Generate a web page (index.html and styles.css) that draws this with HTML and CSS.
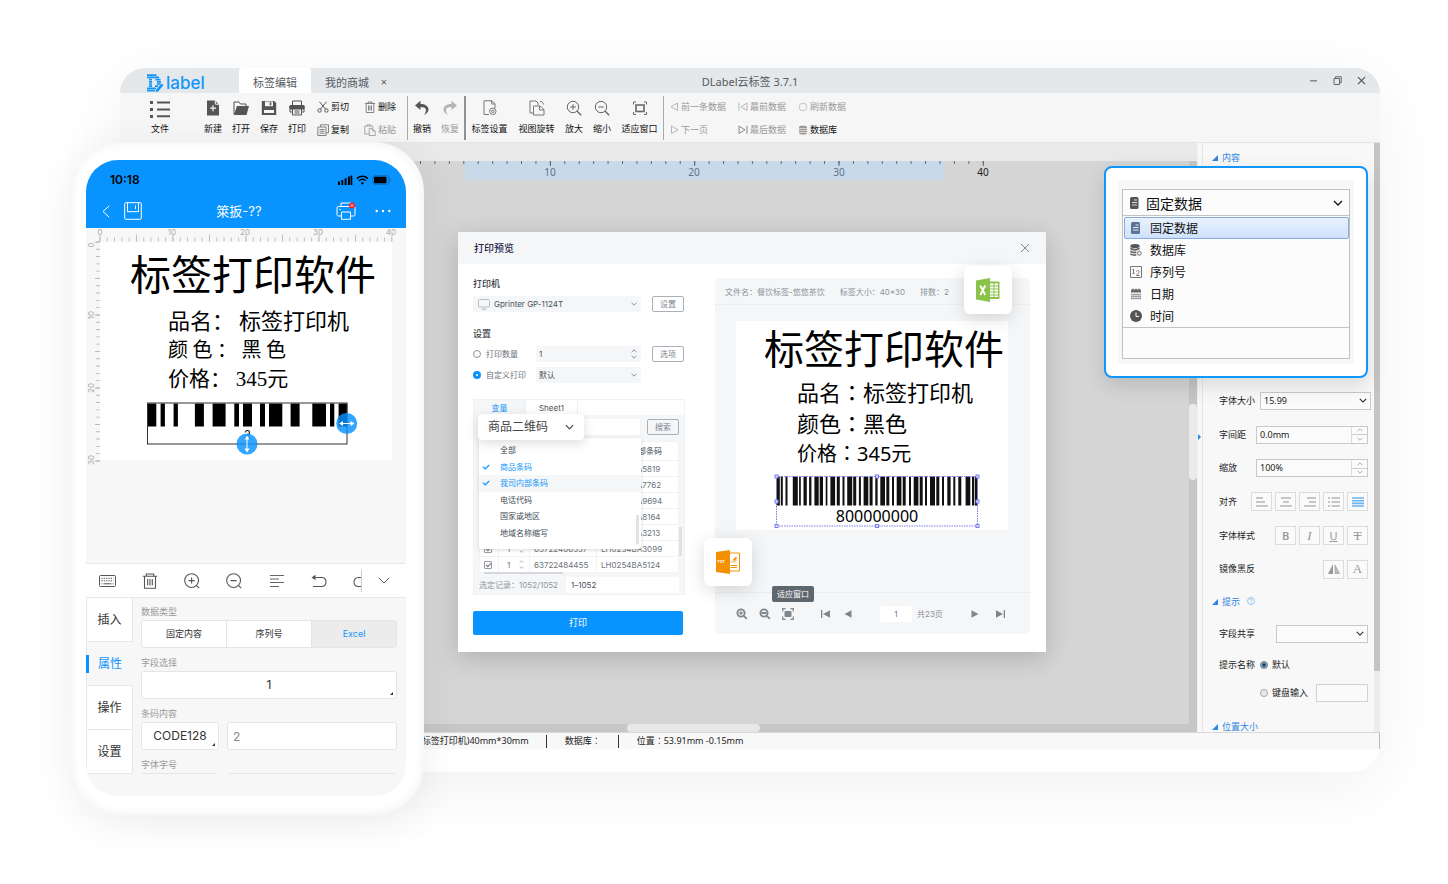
FILE: index.html
```html
<!DOCTYPE html>
<html lang="zh-CN">
<head>
<meta charset="utf-8">
<meta name="viewport" content="width=device-width, initial-scale=1">
<title>DLabel云标签 3.7.1</title>
<link rel="stylesheet" href="styles.css">
</head>
<body>
<svg class="sprite" aria-hidden="true">
  <symbol id="chev" viewBox="0 0 10 6"><path d="M1 1l4 4 4-4" fill="none" stroke="currentColor" stroke-width="1.3"/></symbol>
  <symbol id="chev-up" viewBox="0 0 10 6"><path d="M1 5l4-4 4 4" fill="none" stroke="currentColor" stroke-width="1.3"/></symbol>
  <symbol id="tri" viewBox="0 0 6 6"><path d="M6 0v6H0z" fill="currentColor"/></symbol>
  <symbol id="check" viewBox="0 0 8 6"><path d="M1 2.6l2.2 2.3L7.2 1" fill="none" stroke="currentColor" stroke-width="1.3"/></symbol>
  <symbol id="zin" viewBox="0 0 16 16"><g fill="none" stroke="currentColor"><circle cx="7" cy="7" r="5.7"/><path d="M11.2 11.2l4 4" stroke-width="1.4"/><path d="M4.2 7h5.6M7 4.2v5.6"/></g></symbol>
  <symbol id="zout" viewBox="0 0 16 16"><g fill="none" stroke="currentColor"><circle cx="7" cy="7" r="5.7"/><path d="M11.2 11.2l4 4" stroke-width="1.4"/><path d="M4.2 7h5.6"/></g></symbol>
  <symbol id="pzin" viewBox="0 0 16 16"><g fill="none" stroke="currentColor" stroke-width="1.1"><circle cx="7.6" cy="7.6" r="6.9"/><path d="M12.6 12.6l2.6 2.6M4.6 7.6h6M7.6 4.6v6"/></g></symbol>
  <symbol id="pzout" viewBox="0 0 16 16"><g fill="none" stroke="currentColor" stroke-width="1.1"><circle cx="7.6" cy="7.6" r="6.9"/><path d="M12.6 12.6l2.6 2.6M4.6 7.6h6"/></g></symbol>
</svg>
<main class="stage">
<div class="window">
  <header class="titlebar">
    <div class="logo">
      <svg width="18" height="18" viewBox="0 0 18 18" fill="none" stroke="#1296fb"><path d="M1 1.2h9.5M1 3.4h12M3 5.6h3M9.5 5.6h5M3 7.8h3M11 7.8h4M3 10h3M11 10h3.5M3 12.2h3M9 12.2h3M1 14.4h9M1 16.6h8" stroke-width="1.7"/><path d="M10 15.8l5.4-6.3 2 1.8-5.2 6.2-2.7.4z" fill="#1296fb" stroke="none"/></svg>
      <span>label</span>
    </div>
    <nav class="tabs"><button class="tab tab-on">标签编辑</button><button class="tab">我的商城</button><button class="tab-x" aria-label="关闭标签">×</button></nav>
    <h1 class="app-title">DLabel云标签 3.7.1</h1>
    <div class="win-btns">
      <button aria-label="最小化"><svg width="9" height="9" viewBox="0 0 9 9"><path d="M1 4.8h7" stroke="#888e96" stroke-width="1.6"/></svg></button>
      <button aria-label="还原"><svg width="9" height="9" viewBox="0 0 9 9" fill="none" stroke="#62676f"><path d="M1 2.5h5.5v6H1zM2.5 2.2V.8h5.700v6H7"/></svg></button>
      <button aria-label="关闭"><svg width="9" height="9" viewBox="0 0 9 9"><path d="M1 1.2l7 7M8 1.2l-7 7" stroke="#4f545b" stroke-width="1.2"/></svg></button>
    </div>
  </header>

  <div class="toolbar">
    <button class="tool tool-file"><svg width="22" height="18" viewBox="0 0 22 18"><path d="M1 1h3v3H1zM1 8h3v3H1zM1 15h3v3H1zM8 1.5h13v2H8zM8 8.5h13v2H8zM8 15.2h13v2H8z" fill="#555"/></svg><span>文件</span></button>
    <div class="tool-set">
      <button class="tool"><svg width="16" height="16" viewBox="0 0 16 16"><path d="M2 .5h8l4 4v11H2z" fill="#555"/><path d="M10.3.5v3.7H14" stroke="#f5f5f5" fill="none"/><path d="M5 8.2h6M8 5.2v6" stroke="#f5f5f5" stroke-width="1.2"/></svg><span>新建</span></button>
      <button class="tool"><svg width="16" height="16" viewBox="0 0 16 16"><path d="M1 14V2h5l1.500 2H13v2" fill="none" stroke="#555"/><path d="M4 6h12l-2.500 9H.8z" fill="#555"/></svg><span>打开</span></button>
      <button class="tool"><svg width="16" height="16" viewBox="0 0 16 16"><path d="M.8 1h12.400l2 2v12H.8z" fill="#555"/><path d="M4 1.500h8v4.700H4z" fill="#f5f5f5"/><path d="M9.500 2.300v3" stroke="#555" stroke-width="1.600"/><path d="M3 10h10v3H3z" fill="#f5f5f5"/></svg><span>保存</span></button>
      <button class="tool"><svg width="16" height="16" viewBox="0 0 16 16" fill="none" stroke="#555"><path d="M3.500 5V1h9v4M3.500 12H1V5.500h14V12h-2.500"/><path d="M1 6h14v3H1z" fill="#555"/><path d="M3.500 9h9v6h-9z" fill="#f5f5f5"/><path d="M5.500 11h5M5.500 13h5"/></svg><span>打印</span></button>
    </div>
    <div class="mini-grid edit-grid">
      <button class="mini"><svg width="12" height="12" viewBox="0 0 12 12" fill="none" stroke="#555"><circle cx="2.600" cy="9.500" r="1.700"/><circle cx="9.400" cy="9.500" r="1.700"/><path d="M3.500 8L9.500.8M8.500 8L2.500.8"/></svg>剪切</button>
      <button class="mini"><svg width="12" height="12" viewBox="0 0 12 12" fill="none" stroke="#777" stroke-width=".9"><path d="M1 2.500h10M4 2.500V1h4v1.500M2.200 2.500v9h7.600v-9M4.500 4.500v5M6 4.500v5M7.500 4.500v5"/></svg>删除</button>
      <button class="mini"><svg width="12" height="12" viewBox="0 0 12 12" fill="none" stroke="#777" stroke-width=".9"><path d="M3.500 3V.8h8v8H9M.8 3H9v8.500H.8zM2.500 5.500h5M2.500 7.300h5M2.500 9.200h5"/></svg>复制</button>
      <button class="mini dim"><svg width="12" height="12" viewBox="0 0 12 12" fill="none" stroke="#aaa"><path d="M5 10H.8V2h8v2M3 2.500V.8h3.500v1.700M5.200 4.500h3.300l2.700 2.500v4.500h-6zM8.300 4.500V7h2.800"/></svg>粘贴</button>
    </div>
    <i class="bar"></i>
    <div class="tool-set">
      <button class="tool"><svg width="16" height="16" viewBox="0 0 16 16"><path d="M6.500.8L1 5.500l5.500 4.500V7c3 0 4.800.7 5.300 2.300.5 1.700-.3 3.600-1.800 5.700 3-1.500 4.500-3.300 4.500-5.500 0-3.500-3.500-5.500-8-5.500z" fill="#555"/></svg><span>撤销</span></button>
      <button class="tool dim"><svg width="16" height="16" viewBox="0 0 16 16"><path d="M9.500.8L15 5.500l-5.500 4.500V7c-3 0-4.800.7-5.300 2.300-.5 1.700.3 3.600 1.800 5.700-3-1.500-4.500-3.300-4.500-5.500 0-3.500 3.500-5.500 8-5.500z" fill="#b5b5b5"/></svg><span>恢复</span></button>
    </div>
    <i class="bar bar-bold"></i>
    <div class="tool-set">
      <button class="tool tool-wide"><svg width="16" height="16" viewBox="0 0 16 16" fill="none" stroke="#777"><path d="M7 14.500H2V.8h8l3 3V8M9.700.8V4H13"/><circle cx="10.800" cy="11.300" r="3.200"/><circle cx="10.800" cy="11.300" r="1.200"/></svg><span>标签设置</span></button>
      <button class="tool tool-wide"><svg width="16" height="16" viewBox="0 0 16 16" fill="none" stroke="#777"><path d="M4 13H1V1h6l2 2v2M4.500 15V6h6.500l4 3.500V15zM10.500 6v4H15M11 1.500c2 0 3 .8 3.500 3"/></svg><span>视图旋转</span></button>
      <button class="tool"><svg class="ic-zoom" width="16" height="16"><use href="#zin"/></svg><span>放大</span></button>
      <button class="tool"><svg class="ic-zoom" width="16" height="16"><use href="#zout"/></svg><span>缩小</span></button>
      <button class="tool tool-wide"><svg width="16" height="16" viewBox="0 0 16 16" fill="none" stroke="#666"><path d="M1.500 4.500V2H4M12 2h2.500v2.500M14.500 12v2.500H12M4 14.500H1.500V12"/><path d="M4 5h8v6.500H4z" stroke-width="1.600"/></svg><span>适应窗口</span></button>
    </div>
    <i class="bar"></i>
    <div class="mini-grid data-grid">
      <button class="mini dim"><svg width="9" height="10" viewBox="0 0 9 10" fill="none" stroke="#b5b5b5"><path d="M7.500 1v7.500L1 4.800z"/></svg>前一条数据</button>
      <button class="mini dim"><svg width="10" height="10" viewBox="0 0 10 10" fill="none" stroke="#b5b5b5"><path d="M9 1v7.500L3 4.800zM1 .8v8"/></svg>最前数据</button>
      <button class="mini dim"><svg width="10" height="10" viewBox="0 0 10 10" fill="none" stroke="#c5c5c5"><circle cx="5" cy="5" r="3.800"/></svg>刷新数据</button>
      <button class="mini dim"><svg width="9" height="10" viewBox="0 0 9 10" fill="none" stroke="#b5b5b5"><path d="M1.500 1v7.500L8 4.800z"/></svg>下一页</button>
      <button class="mini dim"><svg width="10" height="10" viewBox="0 0 10 10" fill="none" stroke="#888"><path d="M1 1v7.500l6-3.700zM9 .8v8"/></svg>最后数据</button>
      <button class="mini"><svg width="10" height="10" viewBox="0 0 10 10"><rect x="1" y=".8" width="8" height="8.600" rx="2" fill="#999"/><path d="M1 3.500h8M1 5.500h8M1 7.500h8" stroke="#eee" stroke-width=".7"/></svg>数据库</button>
    </div>
  </div>

  <div class="workspace">
    <section class="canvas">
      <div class="canvas-strip"></div>
      <div class="ruler">
        <svg width="600" height="19" viewBox="0 0 600 19">
          <rect x="45" y="0" width="480" height="19" fill="#c8d9ea"/>
          <path d="M0 1.500H565" stroke="#5c6b7a" stroke-width="3" stroke-dasharray="1 13.430" fill="none"/>
          <path d="M129.900 2.500H565" stroke="#5c6b7a" stroke-width="5" stroke-dasharray="1 143.300" fill="none"/>
          <g class="ruler-num"><text x="130" y="15">10</text><text x="274" y="15">20</text><text x="419" y="15">30</text><text x="563" y="15" class="ruler-dark">40</text></g>
        </svg>
      </div>
      <div class="v-scroll"><i></i></div>
      <div class="h-scroll"><i></i></div>
    </section>
    <aside class="side">
      <i class="side-handle"></i>
      <h2 class="side-head side-first"><svg width="6" height="6"><use href="#tri"/></svg>内容</h2>
      <div class="side-rows">
        <div class="row row-wide"><label for="fs">字体大小</label><span class="pick w111"><select id="fs"><option>15.99</option></select><svg width="8" height="5"><use href="#chev"/></svg></span></div>
        <div class="row"><label for="ls">字间距</label><span class="num"><input id="ls" value="0.0mm"><span class="steps"><button aria-label="增加"><svg width="6" height="4"><use href="#chev-up"/></svg></button><button aria-label="减少"><svg width="6" height="4"><use href="#chev"/></svg></button></span></span></div>
        <div class="row"><label for="sc">缩放</label><span class="num"><input id="sc" value="100%"><span class="steps"><button aria-label="增加"><svg width="6" height="4"><use href="#chev-up"/></svg></button><button aria-label="减少"><svg width="6" height="4"><use href="#chev"/></svg></button></span></span></div>
        <div class="row"><span>对齐</span><div class="icon-btns">
          <button aria-label="左对齐"><svg width="12" height="10" viewBox="0 0 12 10"><path d="M0 1h7M0 5h9M0 9h12" stroke="#b5b5b5" stroke-width="1.500"/></svg></button>
          <button aria-label="居中"><svg width="12" height="10" viewBox="0 0 12 10"><path d="M1 1h10M3 5h6M0 9h12" stroke="#b5b5b5" stroke-width="1.500"/></svg></button>
          <button aria-label="右对齐"><svg width="12" height="10" viewBox="0 0 12 10"><path d="M3 1h9M5 5h7M0 9h12" stroke="#b5b5b5" stroke-width="1.500"/></svg></button>
          <button aria-label="列表"><svg width="12" height="10" viewBox="0 0 12 10"><path d="M0 1h2M3.500 1H12M0 5h2M3.500 5H12M0 9h2M3.500 9H12" stroke="#b5b5b5" stroke-width="1.500"/></svg></button>
          <button aria-label="两端对齐"><svg width="12" height="10" viewBox="0 0 12 10"><path d="M0 1h12M0 3.700h12M0 6.400h12M0 9h12" stroke="#6cb4f5" stroke-width="1.600"/></svg></button>
        </div></div>
        <div class="row"><span>字体样式</span><div class="icon-btns glyphs"><button><b>B</b></button><button><i>I</i></button><button><u>U</u></button><button><s>T</s></button></div></div>
        <div class="row"><span>镜像黑反</span><div class="icon-btns glyphs"><button aria-label="镜像"><svg width="12" height="10" viewBox="0 0 12 10"><path d="M5 0v10H0z" fill="#999"/><path d="M7 1v8.500h4.500z" fill="#bbb" stroke="#999" stroke-width=".6"/></svg></button><button class="serif">A</button></div></div>
      </div>
      <h2 class="side-head"><svg width="6" height="6"><use href="#tri"/></svg>提示 <svg class="help" width="8" height="8" viewBox="0 0 8 8" fill="none" stroke="#6fb1ee" stroke-width=".7"><circle cx="4" cy="4" r="3.500"/><path d="M2.900 3.100c0-1.500 2.300-1.300 2.200 0C5 3.900 4 3.900 4 4.800M4 5.500v.8"/></svg></h2>
      <div class="row"><label for="sh">字段共享</label><span class="pick w92"><select id="sh"><option></option></select><svg width="8" height="5"><use href="#chev"/></svg></span></div>
      <div class="row row-radio"><span class="lead">提示名称</span><label><input type="radio" name="tip" checked>默认</label></div>
      <div class="row row-key"><label><input type="radio" name="tip">键盘输入</label><input class="box" aria-label="提示名称"></div>
      <h2 class="side-head side-last"><svg width="6" height="6"><use href="#tri"/></svg>位置大小</h2>
      <div class="side-scroll"><i></i></div>
    </aside>
  </div>
  <footer class="status"><span>(标签打印机)40mm*30mm</span><i></i><span>数据库<span class="mid" lang="zh-TW">：</span></span><i></i><span>位置<span class="mid" lang="zh-TW">：</span>53.91mm -0.15mm</span></footer>

  <section class="combo-card" aria-label="数据来源">
    <div class="combo-bg"><div class="combo">
      <button class="combo-head"><svg width="10" height="12" viewBox="0 0 10 12"><rect x="1" width="8.500" height="12" rx="1.500" fill="#555"/><path d="M5 3h3M3 5.500h5M3 8h5" stroke="#ddd"/></svg><span>固定数据</span><svg class="combo-chev" width="10" height="6"><use href="#chev"/></svg></button>
      <ul>
        <li class="sel"><svg width="12" height="12" viewBox="0 0 12 12"><rect x="1" width="9" height="12" rx="1.500" fill="#5b7593"/><path d="M5.500 3h3M3 5.500h5.500M3 8h5.500" stroke="#dfeaf8"/></svg>固定数据</li>
        <li><svg width="12" height="12" viewBox="0 0 12 12"><ellipse cx="5" cy="2" rx="4.700" ry="2" fill="#555"/><path d="M.3 3.300c2 1.800 7.400 1.800 9.400 0v2c-2 1.800-7.400 1.800-9.400 0zM.3 6.300c1.500 1.300 4 1.500 6 1.200v1.800c-2 .3-4.500 0-6-1.300zM.3 9c1.500 1.300 4 1.500 6 1.200v1.600c-2 .3-4.500 0-6-1z" fill="#666"/><circle cx="9.300" cy="9.300" r="1.900" fill="none" stroke="#666"/></svg>数据库</li>
        <li><svg width="12" height="12" viewBox="0 0 12 12" fill="none" stroke="#777"><path d="M.5.500h11v11H.5z"/><path d="M2.500 3.500L3.500 3v4.500M2.500 7.500h2M6.500 5.500c.5-1.500 3-1 2.700.3C9 7 6.500 8.500 6.500 9.500h3"/></svg>序列号</li>
        <li><svg width="12" height="12" viewBox="0 0 12 12"><path d="M1 1.500h10v3H1z" fill="#666"/><path d="M3 .5v2M6 .5v2M9 .5v2" stroke="#666"/><path d="M1 6.500h10M1 8.500h10M1 10.500h10" stroke="#888" stroke-width="1.400" stroke-dasharray="1.600 .5"/></svg>日期</li>
        <li><svg width="12" height="12" viewBox="0 0 12 12"><circle cx="6" cy="6" r="6" fill="#555"/><path d="M6 2.500V6.500h3" fill="none" stroke="#fff"/></svg>时间</li>
      </ul>
      <div class="combo-rest"></div>
    </div></div>
  </section>

  <section class="dialog" role="dialog" aria-label="打印预览">
    <header class="dlg-head"><h2>打印预览</h2><button aria-label="关闭"><svg width="10" height="10" viewBox="0 0 10 10"><path d="M1 1l8 8M9 1L1 9" stroke="#858b94"/></svg></button></header>
    <div class="dlg-body">
      <form class="dlg-form">
        <label class="h3" for="prn">打印机</label>
        <div class="line"><span class="pick soft grow"><svg class="mon" width="12" height="11" viewBox="0 0 12 11" fill="none" stroke="#b8bdc2"><rect x=".5" y=".5" width="11" height="7.500" rx="1"/><path d="M6 8v2M3.500 10.300h5"/></svg><select id="prn"><option>Gprinter GP-1124T</option></select><svg width="6" height="4"><use href="#chev"/></svg></span><button type="button" class="btn">设置</button></div>
        <h3 class="h3">设置</h3>
        <div class="line"><label class="rad"><input type="radio" name="m">打印数量</label><span class="pick soft grow"><input class="qty" value="1" aria-label="打印数量"><svg class="up" width="6" height="4"><use href="#chev-up"/></svg><svg class="down" width="6" height="4"><use href="#chev"/></svg></span><button type="button" class="btn">选项</button></div>
        <div class="line line-b"><label class="rad"><input type="radio" name="m" checked>自定义打印</label><span class="pick soft grow"><select aria-label="自定义打印"><option>默认</option></select><svg width="6" height="4"><use href="#chev"/></svg></span></div>
        <div class="data">
          <div class="data-tabs"><button type="button" class="on">变量</button><button type="button">Sheet1</button></div>
          <div class="search"><input aria-label="搜索"><button type="button" class="btn">搜索</button></div>
          <div class="tbl-wrap">
          <table>
            <thead><tr><th></th><th></th><th>商品条码</th><th class="th-r">内部条码</th></tr></thead>
            <tbody>
              <tr><td></td><td></td><td></td><td>LH0254BA5819</td></tr>
              <tr><td></td><td></td><td></td><td>LH0254BA7762</td></tr>
              <tr><td></td><td></td><td></td><td>LH0254BA9694</td></tr>
              <tr><td></td><td></td><td></td><td>LH0254BA8164</td></tr>
              <tr><td></td><td></td><td></td><td>LH0254BA3213</td></tr>
              <tr><td><input type="checkbox" checked aria-label="选择"></td><td><span class="cnt">1<svg width="5" height="9" viewBox="0 0 5 9" fill="none" stroke="#999" stroke-width=".8"><path d="M.8 2.500L2.500.8l1.700 1.700M.8 6.500l1.700 1.700 1.700-1.700"/></svg></span></td><td>63722486557</td><td>LH0254BA3099</td></tr>
              <tr><td><input type="checkbox" checked aria-label="选择"></td><td><span class="cnt">1<svg width="5" height="9" viewBox="0 0 5 9" fill="none" stroke="#999" stroke-width=".8"><path d="M.8 2.500L2.500.8l1.700 1.700M.8 6.500l1.700 1.700 1.700-1.700"/></svg></span></td><td>63722484455</td><td>LH0254BA5124</td></tr>
            </tbody>
          </table>
          <i class="tv"></i><i class="th"></i>
          </div>
          <div class="picked"><label for="rng">选定记录：1052/1052</label><input id="rng" value="1–1052"></div>
          <ul class="menu">
            <li>全部</li>
            <li class="on"><svg width="8" height="6"><use href="#check"/></svg>商品条码</li>
            <li class="on hov"><svg width="8" height="6"><use href="#check"/></svg>我司内部条码</li>
            <li>电话代码</li><li>国家或地区</li><li>地域名称缩写</li>
          </ul>
          <button type="button" class="pill">商品二维码<svg width="9" height="6"><use href="#chev"/></svg></button>
        </div>
        <button type="button" class="print">打印</button>
      </form>
      <div class="preview">
        <div class="info"><span>文件名：餐饮标签-悠悠茶饮</span><span>标签大小：40*30</span><span>排数：2</span></div>
        <div class="paper">
          <p class="p-title">标签打印软件</p>
          <p class="p-line">品名<span class="mid" lang="zh-TW">：</span>标签打印机</p>
          <p class="p-line">颜色<span class="mid" lang="zh-TW">：</span>黑色</p>
          <p class="p-line p-small">价格<span class="mid" lang="zh-TW">：</span>345元</p>
          <div class="code">
            <svg width="206" height="56" viewBox="0 0 206 56">
              <path d="M2.500 17H203.500" fill="none" stroke="#111" stroke-width="29" stroke-dasharray="3.300 1 2 2.700 2 5.300 5 1.300 1.700 2.700 3.300 2.300 2.300 3 4.300 1 3.300 2.700 1.700 3 4.700 1.700 3 2.700 2 2.700 5 1 3 2.700 2 2.700 4.700 1.300 3 2.700 2.300 2.700 4.700 1.300 3 2.700 2 2.700 4.700 1.300 3 3.300 2 2.700 4.700 1.300 3 2.300 2 3 5 1.300 3 2.700 2 3.300 3.300 2.700 2 3 3 4.300 4.700 1.700 2 .7 3 99"/>
              <rect x="2.500" y="2.500" width="201" height="49.500" fill="none" stroke="#7b7bf0" stroke-dasharray="1.500 1"/>
              <g fill="#e6e6ff" stroke="#7b7bf0"><rect x="1" y="1" width="3" height="3"/><rect x="101.500" y="1" width="3" height="3"/><rect x="202" y="1" width="3" height="3"/><rect x="1" y="26" width="3" height="3"/><rect x="202" y="26" width="3" height="3"/><rect x="1" y="50.500" width="3" height="3"/><rect x="101.500" y="50.500" width="3" height="3"/><rect x="202" y="50.500" width="3" height="3"/></g>
            </svg>
            <span>800000000</span>
          </div>
        </div>
        <div class="pager">
          <button aria-label="放大"><svg width="12" height="12" viewBox="0 0 12 12" fill="none" stroke="#7c868c"><circle cx="5" cy="5" r="3.600" stroke-width="1.800"/><path d="M7.800 7.800l3 3" stroke-width="1.800"/><path d="M3.200 5h3.600M5 3.200v3.600" stroke-width="1.300"/></svg></button>
          <button aria-label="缩小"><svg width="12" height="12" viewBox="0 0 12 12" fill="none" stroke="#7c868c"><circle cx="5" cy="5" r="3.600" stroke-width="1.800"/><path d="M7.800 7.800l3 3" stroke-width="1.800"/><path d="M2.500 5h5" stroke-width="2"/></svg></button>
          <button aria-label="适应窗口" class="fit"><svg width="12" height="12" viewBox="0 0 12 12" fill="none" stroke="#7c868c" stroke-width="1.200"><path d="M.7 3.500V.7h2.800M8.500.7h2.800v2.800M11.300 8.500v2.800H8.500M3.500 11.300H.7V8.500"/><rect x="2.500" y="3" width="7" height="6" rx="1" fill="#7c868c" stroke="none"/></svg><span class="tip">适应窗口</span></button>
          <button aria-label="首页" class="p-first"><svg width="9" height="8" viewBox="0 0 9 8" fill="#7c868c"><path d="M0 0h1.300v8H0zM9 .2v7.600L2 4z"/></svg></button>
          <button aria-label="上一页" class="p-prev"><svg width="8" height="8" viewBox="0 0 8 8" fill="#7c868c"><path d="M7.500.2v7.600L.5 4z"/></svg></button>
          <input class="p-num" value="1" aria-label="页码"><span class="p-all">共23页</span>
          <button aria-label="下一页" class="p-next"><svg width="8" height="8" viewBox="0 0 8 8" fill="#7c868c"><path d="M.5.2v7.600L7.500 4z"/></svg></button>
          <button aria-label="末页" class="p-last"><svg width="9" height="8" viewBox="0 0 9 8" fill="#7c868c"><path d="M7.700 0H9v8H7.700zM0 .2v7.600L7 4z"/></svg></button>
        </div>
      </div>
    </div>
    <div class="float float-x"><svg width="24" height="24" viewBox="0 0 24 24"><path d="M13 3.500h10.500v17.500H13z" fill="#8bc34a"/><path d="M14 5.500h3.500v2H14zM18.500 5.500H22v2h-3.500zM14 8.500h3.500v2H14zM18.500 8.500H22v2h-3.500zM14 11.500h3.500v2H14zM18.500 11.500H22v2h-3.500zM14 14.500h3.500v2H14zM18.500 14.500H22v2h-3.500zM14 17.500h3.500v1.500H14zM18.500 17.500H22v1.500h-3.500z" fill="#fff"/><path d="M0 2.500L14 0v24L0 21.500z" fill="#8bc34a"/><path d="M4.300 7.500l5 9.500M9.300 7.500l-5 9.500" stroke="#fff" stroke-width="1.800"/></svg></div>
    <div class="float float-t"><svg width="24" height="24" viewBox="0 0 24 24"><path d="M13 3h10.500v18H13" fill="#fff" stroke="#f39200"/><path d="M14.500 15.500h6.500M14.500 17.500h6.500" stroke="#f39200"/><path d="M14.500 12h4l2-2" fill="none" stroke="#f39200" stroke-width=".7"/><path d="M17.500 10.500l3-3" stroke="#f39200" stroke-width="1.800"/><path d="M0 2L14 0v24L0 22z" fill="#f39200"/><text x="5" y="13" class="txt-mark">TXT</text></svg></div>
  </section>

  <section class="phone" aria-label="手机端">
    <div class="screen">
      <div class="p-status"><b>10:18</b>
        <svg width="56" height="10" viewBox="0 0 56 10"><path d="M1 6.500h2V10H1zM4.300 5h2v5h-2zM7.600 3.300h2V10h-2zM10.900 1.500h2V10h-2zM13.500.5h1.800V10h-1.800z" /><g fill="none" stroke="#000" stroke-width="1.500"><path d="M20 3.600c3-3 7.800-3 10.800 0M22 5.800c2-1.900 4.800-1.900 6.800 0"/></g><path d="M25.400 9.800l-1.700-2c1-.8 2.400-.8 3.400 0z"/><rect x="36" y=".8" width="16" height="8.400" rx="2" fill="none" stroke="#0767b4"/><rect x="37" y="1.800" width="12.500" height="6.500" rx="1"/><path d="M53.500 3.500v3c1-.3 1-2.700 0-3z" fill="#0767b4"/></svg>
      </div>
      <div class="p-nav">
        <button aria-label="返回"><svg width="8" height="13" viewBox="0 0 8 13" fill="none" stroke="#fff"><path d="M7.200.8L1 6.500l6.200 5.700"/></svg></button>
        <button aria-label="保存" class="n-save"><svg width="18" height="18" viewBox="0 0 18 18" fill="none" stroke="#fff"><rect x=".7" y=".7" width="16.600" height="16.600" rx="1"/><path d="M3.500.7v9h11v-9M11.500 3.500v3.500"/></svg></button>
        <h2>箂扳-??</h2>
        <button aria-label="打印"><svg width="20" height="18" viewBox="0 0 20 18" fill="none" stroke="#fff"><path d="M5 4.500V1h10v3.500M5 14H2.500c-1 0-1.500-.5-1.500-1.500V6c0-1 .5-1.500 1.500-1.500h15c1 0 1.500.5 1.500 1.500v6.500c0 1-.5 1.500-1.500 1.500H15M5.500 10h9v7.300h-9zM3.300 7.500h1.500"/><circle cx="16" cy="3.500" r="3" fill="#f22" stroke="none"/><path d="M14.900 2.400l2.200 2.200M17.100 2.400l-2.200 2.200" stroke-width=".8"/></svg></button>
        <button aria-label="更多" class="n-more"><svg width="16" height="4" viewBox="0 0 16 4" fill="#fff"><circle cx="1.700" cy="2" r="1.200"/><circle cx="8" cy="2" r="1.200"/><circle cx="14.300" cy="2" r="1.200"/></svg></button>
      </div>
      <div class="p-canvas">
        <svg class="r-top" width="320" height="14" viewBox="0 0 320 14"><path d="M13.500 11.500H306" fill="none" stroke="#bbb" stroke-width="4" stroke-dasharray=".9 6.400"/><path d="M13.500 10H307" fill="none" stroke="#bbb" stroke-width="7" stroke-dasharray=".9 35.600"/><g class="r-num"><text x="14" y="7">0</text><text x="86" y="7">10</text><text x="159" y="7">20</text><text x="232" y="7">30</text><text x="305" y="7">40</text></g></svg>
        <div class="p-mid">
          <svg class="r-left" width="14" height="226" viewBox="0 0 14 226"><path d="M12 -.5V220" fill="none" stroke="#bbb" stroke-width="4" stroke-dasharray=".9 6.400"/><path d="M11.500 -.5V220" fill="none" stroke="#bbb" stroke-width="5" stroke-dasharray=".9 35.600"/><g class="r-num"><text transform="translate(8 3) rotate(-90)">0</text><text transform="translate(8 73) rotate(-90)">10</text><text transform="translate(8 146) rotate(-90)">20</text><text transform="translate(8 218) rotate(-90)">30</text></g></svg>
          <div class="p-paper">
            <p class="q-title">标签打印软件</p>
            <p class="q-line q-a">品名： 标签打印机</p>
            <p class="q-line q-b">颜 色 ： 黑 色</p>
            <p class="q-line q-c">价格： <span>345</span>元</p>
            <svg class="q-code" width="217" height="54" viewBox="0 0 217 54"><path d="M1 13H200.300" fill="none" stroke="#000" stroke-width="23" stroke-dasharray="8.300 4.300 4.300 8.700 4.300 17 9 8.700 13 8.700 4.700 4 9 8 5 4 13.300 8.300 9 12.700 13.700 4 4.300 4.300 9 99"/><rect x=".5" y="1" width="199.500" height="41" fill="none" stroke="#333"/><text x="97" y="37" font-family="Liberation Sans" font-size="12">2</text><circle cx="199.700" cy="21.500" r="10.500" fill="#0893ff" fill-opacity=".82"/><circle cx="100" cy="42" r="10.500" fill="#0893ff" fill-opacity=".82"/><path d="M194 21.500h11.500" stroke="#fff"/><path d="M192 21.500l4-2.500v5zM207.500 21.500l-4-2.500v5z" fill="#fff"/><path d="M100 36v12" stroke="#fff"/><path d="M100 33.500l-2.500 4h5zM100 50.500l-2.500-4h5z" fill="#fff"/></svg>
          </div>
        </div>
      </div>
      <div class="p-tools">
        <button aria-label="键盘"><svg width="17" height="12" viewBox="0 0 17 12" fill="none" stroke="#555"><rect x=".5" y=".5" width="16" height="11" rx="1"/><path d="M2.500 3.300h12M2.500 5.800h12" stroke-dasharray="1.300 1"/><path d="M4.500 8.800h8M2.500 8.800h1M13.500 8.800h1"/></svg></button>
        <button aria-label="删除"><svg width="16" height="16" viewBox="0 0 16 16" fill="none" stroke="#555" stroke-width="1.100"><path d="M.8 3.300h14.400M4.300 3V1h7.400v2M2.500 3.300v11.900h11V3.300M5.700 6v6.500M8 6v6.500M10.300 6v6.500"/></svg></button>
        <button aria-label="放大"><svg width="16" height="16"><use href="#pzin"/></svg></button>
        <button aria-label="缩小"><svg width="16" height="16"><use href="#pzout"/></svg></button>
        <button aria-label="对齐"><svg width="16" height="14" viewBox="0 0 16 14"><path d="M1 1.500h14M1 5h9M1 8.500h14M1 12.500h9" stroke="#666" stroke-width="1.200"/></svg></button>
        <button aria-label="撤销"><svg width="16" height="14" viewBox="0 0 16 14" fill="none" stroke="#555" stroke-width="1.100"><path d="M1.500 3.500h9c6 0 6 9 0 9H2"/><path d="M.5 3.500L4.500.8v5.400z" fill="#555" stroke="none"/></svg></button>
        <button aria-label="重做" class="redo"><svg width="9" height="22" viewBox="0 0 9 22" fill="none"><path d="M8 7.500H5.500c-6 0-6 9 0 9H8" stroke="#555" stroke-width="1.100"/><path d="M8.500 0v22" stroke="#ccc"/></svg></button>
        <button aria-label="收起"><svg width="12" height="7" viewBox="0 0 12 7" fill="none" stroke="#555"><path d="M.8.8L6 6 11.200.8"/></svg></button>
      </div>
      <div class="p-form">
        <nav class="p-tabs"><button>插入</button><button class="on">属性</button><button>操作</button><button>设置</button></nav>
        <div class="p-fields">
          <span class="cap">数据类型</span>
          <div class="seg"><button>固定内容</button><button>序列号</button><button class="on">Excel</button></div>
          <span class="cap">字段选择</span>
          <button class="fld">1<svg class="corner" width="3" height="3"><use href="#tri"/></svg></button>
          <span class="cap">条码内容</span>
          <div class="pair"><button class="fld">CODE128<svg class="corner" width="3" height="3"><use href="#tri"/></svg></button><input class="fld" value="2" aria-label="条码内容"></div>
          <span class="cap">字体字号</span>
          <div class="pair"><button class="fld" aria-label="字体"></button><input class="fld" aria-label="字号"></div>
        </div>
      </div>
    </div>
  </section>
</div>
</main>
</body>
</html>
```
FILE: styles.css
```css
* { box-sizing: border-box; }
body, h1, h2, h3, p, ul { margin: 0; padding: 0; }
body {
  background: #fff;
  font: 9px/12px "Noto Sans", "Noto Sans CJK SC", sans-serif;
  color: #222;
}
button, input, select { font: inherit; color: inherit; margin: 0; padding: 0; border: 0; background: none; border-radius: 0; }
button { cursor: pointer; white-space: nowrap; }
select { appearance: none; }
input { min-width: 0; }
h1, h2, h3 { font-size: inherit; font-weight: 400; }
ul { list-style: none; }
svg { display: block; flex: none; }
.sprite { position: absolute; width: 0; height: 0; }
.stage { padding: 68px 68px 112px 120px; min-width: 1448px; overflow: hidden; }

.window {
  position: relative;
  padding-bottom: 23px;
  background: #fff;
  border-radius: 28px;
  box-shadow: 0 14px 70px rgba(0, 0, 0, .06);
}

/* title bar */
.titlebar {
  position: relative;
  display: flex;
  align-items: center;
  height: 25px;
  padding: 0 14px 0 26px;
  background: #e4e8eb;
  border-radius: 28px 28px 0 0;
  font-size: 11px;
  line-height: 27px;
  color: #555b62;
}
.logo { display: flex; align-items: center; gap: 2px; width: 93px; padding-top: 4px; color: #1296fb; font: 500 17px/22px Inter, sans-serif; }
.tabs { display: flex; height: 25px; }
.tab { width: 72px; padding-top: 1px; }
.tab-on { background: #fff; border-radius: 3px 3px 0 0; }
.tab-x { width: 8px; margin-left: -3px; }
.app-title { position: absolute; inset: 0; text-align: center; font-size: 11px; pointer-events: none; }
.win-btns { display: flex; gap: 15px; margin-left: auto; position: relative; }
.win-btns button { height: 9px; }

/* toolbar */
.toolbar {
  display: flex;
  align-items: center;
  height: 49px;
  padding-left: 20px;
  background: #f6f6f6;
  color: #111;
}
.tool-set { display: flex; }
.tool { display: flex; flex-direction: column; align-items: center; justify-content: space-between; width: 28px; height: 36px; padding-bottom: 1px; }
.tool-file { width: 40px; margin-right: 19px; }
.tool-wide { width: 47px; }
.ic-zoom { color: #666; }
.dim { color: #999; }
.mini-grid { display: grid; row-gap: 11px; padding-top: 1px; }
.edit-grid { grid-template-columns: 35px 35px; column-gap: 12px; margin: 0 8px 0 6px; }
.data-grid { grid-template-columns: 58px 50px 50px; column-gap: 10px; margin-left: 6px; }
.mini { display: flex; align-items: center; gap: 2px; height: 12px; }
.bar { width: 1px; height: 44px; background: #aaa; }
.bar-bold { width: 2px; background: #8d9298; }

/* workspace */
.workspace { display: flex; height: 590px; border-top: 1px solid #e4e4e4; }
.canvas {
  flex: 1;
  display: grid;
  grid-template: 18px 19px 1fr 8px / 1fr 8px;
  background: #d5d5d5;
}
.canvas-strip { grid-column: 1 / 3; background: #e9e9e9; }
.ruler { padding-left: 300px; }
.ruler-num { font-size: 10px; fill: #5d7389; text-anchor: middle; }
.ruler-dark { fill: #222; }
.v-scroll { grid-area: 2 / 2 / 4 / 3; background: #c6c6c6; padding-top: 243px; }
.v-scroll i { display: block; height: 76px; background: #ebebeb; border-radius: 4px; }
.h-scroll { grid-area: 4 / 1 / 5 / 3; background: #c6c6c6; padding-left: 507px; }
.h-scroll i { display: block; width: 133px; height: 8px; background: #e8e8e8; border-radius: 4px; }

.side {
  position: relative;
  width: 183px;
  padding: 0 6px 0 4px;
  background: #f8f8f8;
  overflow: hidden;
  border-left: 1px solid #f2f2f2;
}
.side::before { content: ""; position: absolute; left: 4px; top: 0; bottom: 0; width: 1px; background: #e6e6e6; }
.side-handle { position: absolute; left: 0; top: 291px; border: 3px solid transparent; border-left-color: #1f8bf0; border-right: 0; }
.side-head { display: flex; align-items: center; gap: 4px; height: 32px; padding-left: 10px; color: #2f86e0; }
.help { margin-left: 3px; margin-bottom: 2px; }
.side-first { height: 30px; margin-bottom: 211px; }
.side-last { margin-top: 6px; }
.side-rows { display: flex; flex-direction: column; height: 202px; }
.side-rows .row { flex: 1; }
.row { display: flex; align-items: center; justify-content: space-between; height: 31px; padding: 0 6px 0 17px; }
.row-wide { padding-right: 3px; }
.side .pick, .num { border: 1px solid #c9c9c9; background: #fbfbfb; height: 18px; }
.pick { position: relative; display: flex; align-items: center; }
.pick select { flex: 1; height: 100%; padding: 0 3px; }
.pick svg { position: absolute; right: 3px; pointer-events: none; }
.w111 { width: 111px; }
.w92 { width: 92px; }
.num { display: flex; width: 112px; }
.num input { flex: 1; padding: 0 3px; }
.steps { display: flex; flex-direction: column; width: 16px; border-left: 1px solid #ddd; color: #999; }
.steps button { flex: 1; display: grid; place-items: center; }
.steps button + button { border-top: 1px solid #ccc; }
.icon-btns { display: flex; gap: 3px; }
.icon-btns button { width: 21px; height: 19px; border: 1px solid #dcdcdc; background: #fafafa; display: grid; place-items: center; }
.glyphs { color: #999; font-size: 11px; }
.glyphs i, .glyphs s, .serif { font-family: "Liberation Serif", serif; font-size: 13px; }
.glyphs b { font-weight: 600; }
.row-radio { justify-content: flex-start; gap: 5px; height: 32px; }
.row-key { height: 24px; padding-left: 58px; }
.row label { white-space: nowrap; }
.row-radio label, .row-key label { display: flex; align-items: center; gap: 4px; }
.row input[type=radio] { appearance: none; width: 8px; height: 8px; border: 1px solid #aaa; border-radius: 50%; background: #e8e8e8; }
.row input[type=radio]:checked { background: radial-gradient(#123f66 0 1px, #9fd0ea 3px); border-color: #777; }
.box { width: 52px; height: 18px; border: 1px solid #d2d2d2; background: #fafafa; }
.side-scroll { position: absolute; right: 0; top: 0; bottom: 0; width: 6px; background: #ececec; }
.side-scroll i { display: block; height: 528px; background: #c4c4c4; }

.status {
  display: flex;
  align-items: center;
  height: 17px;
  padding-left: 299px;
  background: #f8f8f8;
  border-top: 1px solid #d8d8d8;
  border-right: 1px solid #bbb;
}
.status i { width: 1px; height: 13px; background: #333; margin: 0 18px 0 17px; }
.mid { font-family: "Noto Sans CJK TC", sans-serif; }

/* data source card */
.combo-card {
  position: absolute;
  right: 12px;
  top: 98px;
  width: 264px;
  height: 212px;
  padding: 12px;
  background: #fff;
  border: 2px solid #1296fb;
  border-radius: 8px;
  box-shadow: 0 8px 20px rgba(0, 0, 0, .12);
}
.combo-bg { height: 100%; padding: 9px 4px 5px; background: #f7f7f7; }
.combo { height: 100%; border: 1px solid #c2c2c2; background: #fcfcfc; font: 12px/16px "Noto Sans CJK SC", sans-serif; color: #111; }
.combo-head { display: flex; align-items: center; gap: 7px; width: 100%; height: 26px; padding: 0 6px; border-bottom: 1px solid #c2c2c2; font-size: 14px; }
.combo-chev { margin-left: auto; }
.combo li { display: flex; align-items: center; gap: 8px; height: 22px; padding-left: 5px; border: 1px solid transparent; border-radius: 2px; }
.combo ul { padding: 1px 0 0 1px; }
.combo .sel { border-color: #84aade; background: linear-gradient(#e9f2fd, #cfe1fb); }
.combo-rest { border-top: 1px solid #c2c2c2; }

/* print dialog */
.dialog {
  position: absolute;
  left: 338px;
  top: 164px;
  width: 588px;
  background: #fff;
  box-shadow: 0 6px 24px rgba(0, 0, 0, .18);
  font: 8px/12px Inter, "Noto Sans CJK SC", sans-serif;
  color: #6b737b;
}
.dlg-head { display: flex; justify-content: space-between; align-items: center; height: 32px; padding: 0 16px; background: #f5f6f8; }
.dlg-head h2 { font-size: 10px; font-weight: 500; color: #26264a; }
.dlg-body { display: flex; justify-content: space-between; padding: 14px 16px 17px 15px; }
.dlg-form { display: flex; flex-direction: column; width: 212px; }
.h3 { margin-bottom: 6px; font-size: 9px; font-weight: 500; line-height: 12px; color: #333b45; }
.line + .h3 { margin-top: 16px; }
.line { display: flex; align-items: center; height: 16px; padding-right: 1px; }
.line-b { margin-top: 5px; padding-right: 44px; }
.grow { flex: 1; }
.soft { height: 16px; background: #f5f6f8; border-radius: 2px; }
.soft select, .soft input { height: 16px; min-width: 0; padding: 0 3px; color: #4a525a; }
.qty { width: 60px; }
.soft svg { right: 4px; }
.soft .mon { position: static; margin-left: 5px; }
.mon + select { padding-left: 4px; }
.soft .up { top: 3px; }
.soft .down { bottom: 3px; }
.btn { width: 32px; height: 16px; margin-left: 11px; border: 1px solid #a9b0b8; border-radius: 2px; line-height: 12px; color: #7d858e; }
.rad { display: flex; align-items: center; gap: 5px; width: 63px; }
.rad input { appearance: none; width: 8px; height: 8px; border: 1px solid #8d959c; border-radius: 50%; }
.rad input:checked { border: 3px solid #0893ff; }

.data { position: relative; margin-top: 16px; height: 196px; padding-right: 5px; background: #f5f6f8; border: 1px solid #f1f2f4; }
.data-tabs { display: flex; height: 15px; margin-right: -5px; background: #fff; }
.data-tabs button { width: 52px; border-right: 1px solid #eef0f2; color: #555; }
.data-tabs .on { background: #f5f6f8; color: #1296fb; }
.search { display: flex; margin-top: 4px; }
.search input { flex: 1; margin-left: 5px; background: #fff; border-radius: 2px; }
.search .btn { margin-left: 7px; }
.tbl-wrap { position: relative; margin: 6px 0 0 5px; }
table { width: 100%; height: 132px; border-collapse: collapse; table-layout: fixed; background: #fff; }
thead tr { height: 19px; }
th, td { padding: 0 0 0 4px; border: 1px solid #f1f2f4; font-weight: 400; text-align: left; white-space: nowrap; line-height: 12px; overflow: hidden; }
th:first-child { width: 19px; }
th:nth-child(2) { width: 31px; }
th:nth-child(3) { width: 67px; }
th { font-weight: 500; }
th.th-r { padding-left: 33px; }
td input { appearance: none; position: relative; display: block; width: 8px; height: 8px; border: 1px solid #959ca3; border-radius: 1px; }
td input:checked::before { content: ""; position: absolute; left: 1px; top: 1px; width: 4px; height: 2px; border: solid #6f777e; border-width: 0 0 1px 1px; transform: rotate(-45deg); }
.cnt { display: flex; align-items: center; justify-content: space-between; padding: 0 5px 0 4px; }
.tv { position: absolute; right: -3px; bottom: 17px; width: 3px; height: 29px; background: #dfe3e7; }
.th { position: absolute; left: 5px; bottom: -1px; width: 79px; height: 2px; background: #d5d9dd; }
.picked { display: flex; align-items: center; justify-content: space-between; margin: 4px 0 0 5px; color: #8f969d; }
.picked input { width: 113px; height: 16px; padding: 0 5px; background: #fff; border-radius: 2px; color: #4a525a; }
.menu { position: absolute; left: 5px; top: 38px; display: flex; flex-direction: column; width: 162px; height: 111px; padding: 4px 0 8px; background: #fff; border-radius: 2px; box-shadow: 0 1px 4px rgba(0, 0, 0, .14); color: #444c55; }
.menu::after { content: ""; position: absolute; right: 2px; bottom: 5px; width: 3px; height: 29px; background: #e0e3e6; }
.menu li { position: relative; flex: 1; padding-left: 21px; line-height: 16px; }
.menu li svg { position: absolute; left: 3px; top: 5px; }
.menu .on { color: #1296fb; }
.menu .hov { background: #f5f6f8; }
.pill { position: absolute; left: 4px; top: 14px; display: flex; align-items: center; justify-content: space-between; width: 106px; height: 26px; padding: 0 10px; background: #fff; border-radius: 4px; box-shadow: 0 3px 12px rgba(0, 0, 0, .14); font-size: 12px; color: #444; }
.print { width: 210px; height: 24px; margin-top: 16px; background: #0893ff; border-radius: 2px; color: #fff; font-size: 9px; }

.preview { position: relative; display: flex; flex-direction: column; width: 315px; height: 356px; background: #f5f6f8; border-radius: 5px; }
.info { display: flex; gap: 15px; height: 27px; padding: 8px 0 0 10px; border-bottom: 1px solid #eceef0; color: #8c9298; }
.paper { width: 272px; height: 209px; margin: 16px 0 0 21px; padding: 1px 0 0 28px; background: #fff; color: #000; font-family: "Noto Sans", "Noto Sans CJK SC", sans-serif; }
.p-title { font-size: 40px; line-height: 54px; white-space: nowrap; }
.p-line { padding-left: 33px; font-size: 22px; line-height: 30px; white-space: nowrap; }
.p-small { font-size: 20px; }
.code { position: relative; margin: 5px 0 0 10px; }
.code span { position: absolute; left: 0; width: 206px; top: 32px; text-align: center; font-size: 16px; line-height: 20px; }
.pager { display: flex; align-items: center; margin-top: auto; height: 42px; padding: 0 25px 0 21px; border-top: 1px solid #eaecee; }
.pager button { margin-right: 11px; }
.pager .fit { position: relative; }
.tip { position: absolute; left: -15px; right: -15px; top: -22px; height: 16px; margin-right: -5px; margin-left: 5px; background: #5f676e; border-radius: 2px; color: #fff; line-height: 16px; }
.pager .p-first { margin: 0 14px 0 16px; }
.pager .p-prev { margin: 0 28px 0 0; }
.p-num { width: 32px; height: 16px; background: #fff; border-radius: 2px; text-align: center; }
.p-all { margin-left: 5px; color: #8c9298; }
.pager .p-next { margin: 0 17px 0 auto; }
.pager .p-last { margin: 0; }
.float { position: absolute; display: grid; place-items: center; width: 48px; height: 48px; background: #fff; border-radius: 6px; box-shadow: 0 4px 18px rgba(0, 0, 0, .14); }
.float-x { right: 34px; top: 34px; }
.float-t { left: 246px; top: 306px; }
.txt-mark { font: 700 4px "Liberation Sans", sans-serif; fill: #fff; text-anchor: middle; }

/* phone */
.phone {
  position: absolute;
  left: -50px;
  top: 74px;
  width: 354px;
  padding: 18px 18px 19px 16px;
  background: #fff;
  border-radius: 50px;
  box-shadow: 0 8px 40px rgba(0, 0, 0, .07), inset 0 0 12px rgba(0, 0, 0, .07);
  font: 9px/12px Inter, "Noto Sans CJK SC", sans-serif;
  color: #333;
}
.screen { height: 636px; background: #f7f7f7; border-radius: 32px; overflow: hidden; }
.p-status { display: flex; align-items: center; justify-content: space-between; height: 34px; padding: 5px 13px 0 24px; background: #0893ff; color: #000; font-size: 12px; }
.p-status b { font-weight: 600; }
.p-nav { display: flex; align-items: center; height: 34px; padding: 0 15px 0 16px; background: #0893ff; color: #fff; }
.p-nav h2 { flex: 1; text-align: center; font-size: 13px; line-height: 18px; }
.n-save { margin-left: 14px; }
.n-more { margin-left: 19px; }
.p-canvas { height: 335px; }
.p-mid { display: flex; }
.r-left { overflow: visible; }
.r-num { font-size: 8px; fill: #aaa; text-anchor: middle; }
.p-paper { width: 292px; height: 218px; padding-left: 30px; background: #fff; border-radius: 2px; color: #000; }
.q-title { font-size: 41px; line-height: 60px; padding-top: 3px; white-space: nowrap; }
.q-line { padding-left: 38px; line-height: 29px; white-space: nowrap; font-family: "Noto Sans CJK SC", sans-serif; }
.q-a { font-size: 22px; }
.q-b { font-size: 20px; }
.q-c { font-size: 21px; }
.q-c span { font-family: "Liberation Serif", serif; }
.q-code { margin: 8px 0 0 17px; overflow: visible; }
.p-tools { display: flex; align-items: center; justify-content: space-between; height: 35px; padding: 0 16px 0 13px; background: #fff; border: 1px solid #e8e8e8; border-width: 1px 0; color: #555; }
.redo { margin-right: -10px; }
.p-form { display: flex; height: 176px; overflow: hidden; }
.p-tabs { width: 47px; }
.p-tabs button { display: block; width: 47px; height: 44px; background: #fff; border: 1px solid #e8e8e8; border-width: 0 1px 1px; font-size: 12px; }
.p-tabs .on { position: relative; background: none; border-right: 0; color: #1296fb; }
.p-tabs .on::before { content: ""; position: absolute; left: -1px; top: 13px; width: 3px; height: 18px; background: #0893ff; }
.p-fields { flex: 1; padding: 7px 9px 0 8px; }
.cap { display: block; height: 14px; line-height: 14px; margin-bottom: 1px; color: #999; }
.seg { display: flex; height: 28px; margin-bottom: 8px; border: 1px solid #e5e5e5; border-radius: 3px; background: #fff; overflow: hidden; }
.seg button { flex: 1; border-left: 1px solid #e5e5e5; }
.seg button:first-child { border-left: 0; }
.seg .on { background: #ececec; color: #1296fb; }
.fld { position: relative; display: block; width: 100%; height: 28px; margin-bottom: 8px; border: 1px solid #e5e5e5; border-radius: 3px; background: #fff; font-size: 12px; }
.corner { position: absolute; right: 3px; bottom: 3px; }
.pair { display: flex; gap: 8px; }
.pair button { width: 78px; }
.pair input { flex: 1; padding: 0 5px; color: #888; }
```
